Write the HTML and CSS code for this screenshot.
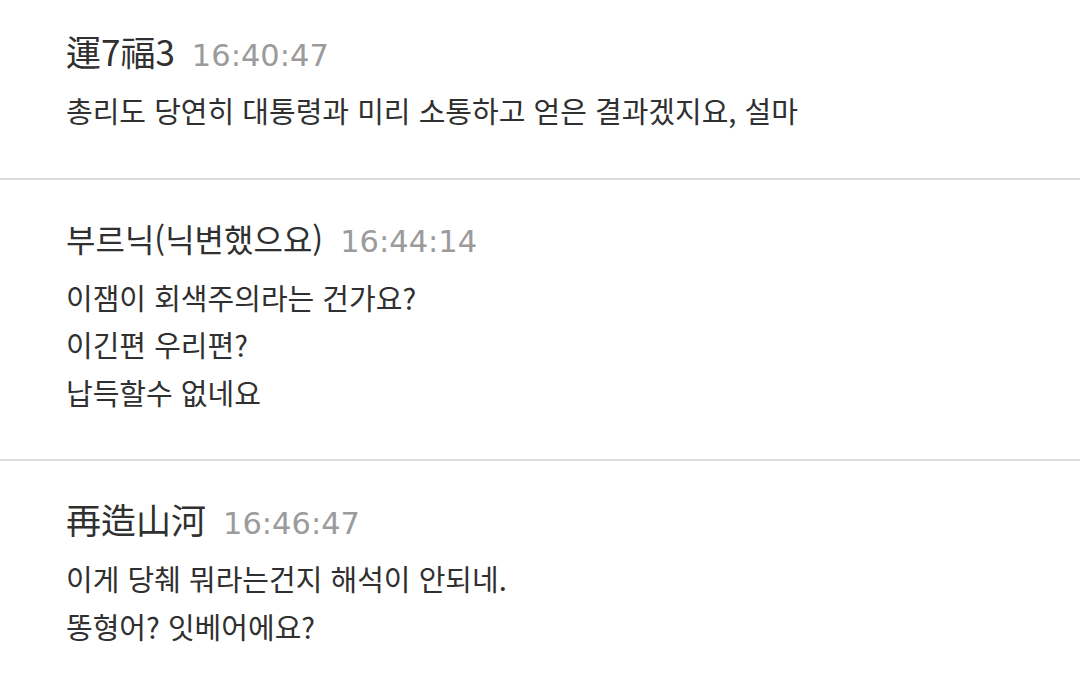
FILE: index.html
```html
<!DOCTYPE html>
<html lang="ko">
<head>
<meta charset="utf-8">
<title>댓글</title>
<link rel="stylesheet" href="styles.css">
</head>
<body>
<main class="comments">
  <article class="comment">
    <header class="comment-head">
      <span class="nick nick-han">運7福3</span>
      <time class="time">16:40:47</time>
    </header>
    <p class="comment-body">총리도 당연히 대통령과 미리 소통하고 얻은 결과겠지요, 설마</p>
  </article>
  <article class="comment">
    <header class="comment-head">
      <span class="nick">부르닉(닉변했으요)</span>
      <time class="time">16:44:14</time>
    </header>
    <p class="comment-body">이잼이 회색주의라는 건가요?<br>이긴편 우리편?<br>납득할수 없네요</p>
  </article>
  <article class="comment">
    <header class="comment-head">
      <span class="nick nick-han">再造山河</span>
      <time class="time">16:46:47</time>
    </header>
    <p class="comment-body">이게 당췌 뭐라는건지 해석이 안되네.<br>똥형어? 잇베어에요?</p>
  </article>
</main>
</body>
</html>
```

FILE: styles.css
```css
html, body {
  margin: 0;
  padding: 0;
  background: #ffffff;
}

body {
  font-family: "Noto Sans CJK KR", "Noto Sans", sans-serif;
  color: #333333;
  width: 1080px;
  height: 691px;
  overflow: hidden;
}

.comments {
  display: flex;
  flex-direction: column;
}

.comment {
  padding: 34px 0 43px 66px;
  border-bottom: 2px solid #dedede;
}

.comment:first-child {
  padding-top: 27px;
}

.comment:last-child {
  border-bottom: none;
}

.comment-head {
  display: flex;
  align-items: baseline;
  gap: 17px;
  height: 48px;
  line-height: 48px;
}

.nick {
  font-size: 32px;
  font-weight: 400;
  color: #303030;
}

.nick-han {
  font-size: 35px;
}

.time {
  font-family: "DejaVu Sans", sans-serif;
  font-size: 30.5px;
  color: #9b9b9b;
}

.comment-body {
  margin: 12px 0 0;
  font-size: 29px;
  font-weight: 400;
  line-height: 47.5px;
  color: #303030;
}
```
